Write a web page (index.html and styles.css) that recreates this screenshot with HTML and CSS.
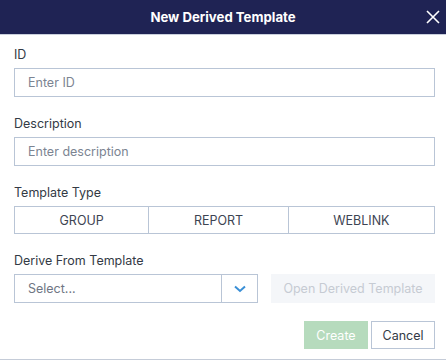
FILE: index.html
```html
<!DOCTYPE html>
<html lang="en">
<head>
    <meta charset="UTF-8">
    <meta name="viewport" content="width=device-width, initial-scale=1.0">
    <title>New Derived Template</title>
    <link rel="stylesheet" href="styles.css">
</head>
<body>
    <div class="dialog">
        <div class="dialog-header">
            <h1>New Derived Template</h1>
            <button class="close-button" aria-label="Close">
                <svg width="14" height="14" viewBox="0 0 14 14">
                    <path d="M1 1 L13 13 M13 1 L1 13" stroke="#fff" stroke-width="1.6" fill="none"/>
                </svg>
            </button>
        </div>
        <div class="dialog-body">
            <div class="field">
                <label for="template-id">ID</label>
                <input type="text" id="template-id" placeholder="Enter ID">
            </div>
            <div class="field">
                <label for="template-desc">Description</label>
                <input type="text" id="template-desc" placeholder="Enter description">
            </div>
            <div class="field">
                <label>Template Type</label>
                <div class="segmented">
                    <button>GROUP</button>
                    <button>REPORT</button>
                    <button>WEBLINK</button>
                </div>
            </div>
            <div class="field">
                <label>Derive From Template</label>
                <div class="derive-row">
                    <div class="select-box">
                        <span class="select-value">Select...</span>
                        <span class="select-arrow">
                            <svg width="12" height="8" viewBox="0 0 12 8">
                                <path d="M1 1.5 L6 6 L11 1.5" stroke="#3a8fd6" stroke-width="2" fill="none"/>
                            </svg>
                        </span>
                    </div>
                    <button class="open-derived" disabled>Open Derived Template</button>
                </div>
            </div>
            <div class="dialog-actions">
                <button class="create-button" disabled>Create</button>
                <button class="cancel-button">Cancel</button>
            </div>
        </div>
    </div>
</body>
</html>
```

FILE: styles.css
```css
body {
    margin: 0;
    font-family: Inter, "Liberation Sans", sans-serif;
    background-color: #fff;
    color: #333a45;
}
.dialog {
    width: 446px;
    height: 360px;
    border-bottom: 1px solid #c5ccd8;
    box-sizing: border-box;
}
.dialog-header {
    height: 34px;
    background-color: #1f2354;
    border-bottom: 1px solid #c9cfdc;
    display: flex;
    align-items: center;
    justify-content: center;
    position: relative;
}
.dialog-header h1 {
    margin: 0;
    font-size: 13.2px;
    font-weight: 700;
    color: #fff;
}
.close-button {
    position: absolute;
    right: 6px;
    top: 10px;
    background: none;
    border: none;
    padding: 0;
    width: 14px;
    height: 14px;
    cursor: pointer;
}
.dialog-body {
    padding: 12px 11px 0 14px;
}
.field {
    margin-bottom: 19px;
}
.field label {
    display: block;
    font-size: 12.5px;
    line-height: 15px;
    margin-bottom: 6px;
    color: #333a45;
}
.field input[type="text"] {
    width: 100%;
    height: 29px;
    box-sizing: border-box;
    border: 1px solid #b9c5d6;
    padding: 0 13px;
    font-family: inherit;
    font-size: 12.5px;
    color: #333a45;
}
.field input::placeholder {
    color: #7c8492;
}
.segmented {
    display: flex;
    height: 28px;
    border: 1px solid #b9c5d6;
    box-sizing: border-box;
}
.segmented button {
    flex: 1 1 auto;
    background: #fff;
    border: none;
    border-left: 1px solid #b9c5d6;
    font-family: inherit;
    font-size: 12.5px;
    color: #3d4452;
    cursor: pointer;
}
.segmented button:first-child {
    border-left: none;
}
.derive-row {
    display: flex;
    gap: 13px;
}
.select-box {
    width: 244px;
    height: 29px;
    box-sizing: border-box;
    border: 1px solid #b9c5d6;
    display: flex;
    align-items: center;
}
.select-value {
    flex: 1;
    padding-left: 13px;
    font-size: 12.5px;
    color: #6f7684;
}
.select-arrow {
    width: 35px;
    height: 100%;
    border-left: 1px solid #b9c5d6;
    display: flex;
    align-items: center;
    justify-content: center;
}
.open-derived {
    flex: 1;
    height: 29px;
    background-color: #f4f6f9;
    border: none;
    font-family: inherit;
    font-size: 12.5px;
    color: #c6cbd3;
}
.dialog-actions {
    display: flex;
    justify-content: flex-end;
    gap: 3px;
    margin-top: -1px;
}
.create-button,
.cancel-button {
    width: 64px;
    height: 28px;
    font-family: inherit;
    font-size: 12.5px;
    box-sizing: border-box;
    cursor: pointer;
}
.create-button {
    background-color: #b6dbbd;
    border: none;
    color: #fff;
}
.cancel-button {
    background-color: #fff;
    border: 1px solid #b9c5d6;
    color: #333a45;
}
```
